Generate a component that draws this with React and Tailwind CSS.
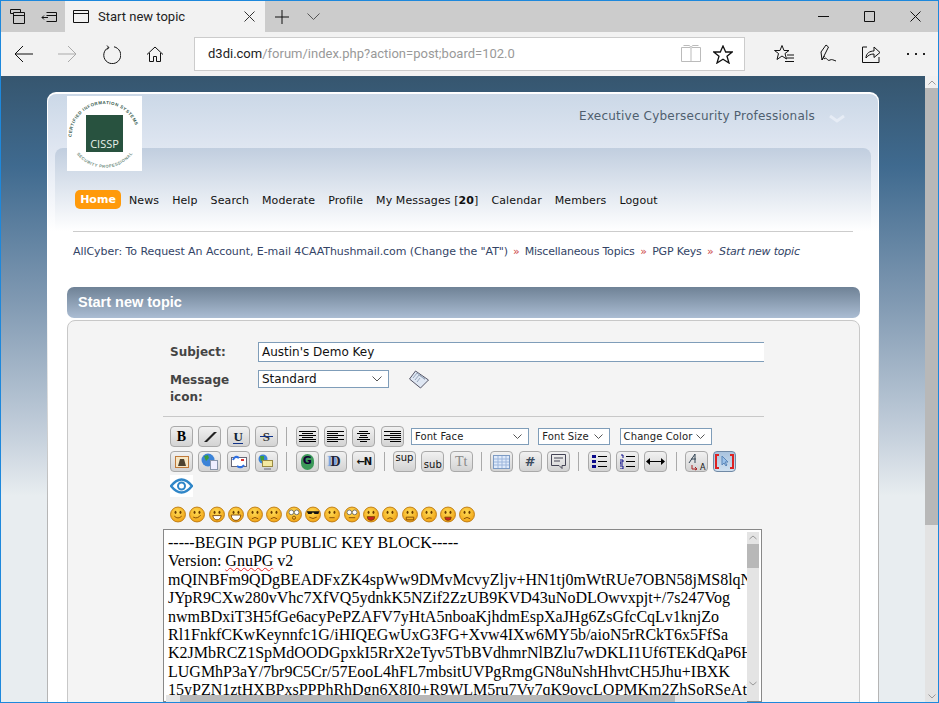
// App.jsx
import React from 'react';

const verdana = "font-['DejaVu_Sans',sans-serif]";

const lines = [
  'mQINBFm9QDgBEADFxZK4spWw9DMvMcvyZljv+HN1tj0mWtRUe7OBN58jMS8lqNwE',
  'JYpR9CXw280vVhc7XfVQ5ydnkK5NZif2ZzUB9KVD43uNoDLOwvxpjt+/7s247Vog',
  'nwmBDxiT3H5fGe6acyPePZAFV7yHtA5nboaKjhdmEspXaJHg6ZsGfcCqLv1knjZo',
  'Rl1FnkfCKwKeynnfc1G/iHIQEGwUxG3FG+Xvw4IXw6MY5b/aioN5rRCkT6x5FfSa',
  'K2JMbRCZ1SpMdOODGpxkI5RrX2eTyv5TbBVdhmrNlBZlu7wDKLI1Uf6TEKdQaP6HsT',
  'LUGMhP3aY/7br9C5Cr/57EooL4hFL7mbsitUVPgRmgGN8uNshHhvtCH5Jhu+IBXK',
  '15yPZN1ztHXBPxsPPPhRhDgn6X8I0+R9WLM5ru7Vy7qK9ovcLOPMKm2ZhSoRSeAtUw',
];

const nav = ['News', 'Help', 'Search', 'Moderate', 'Profile'];
const nav2 = ['Calendar', 'Members', 'Logout'];

// browser chrome icon, thin black strokes
const Ico = ({ w = 20, h = 20, stroke = '#111', children }) => (
  <svg width={w} height={h} viewBox={`0 0 ${w} ${h}`} fill="none" stroke={stroke} strokeWidth="1" className="shrink-0">
    {children}
  </svg>
);

const ToolBtn = ({ children, active }) => (
  <div className={`w-[23px] h-[21px] shrink-0 flex items-center justify-center rounded-[4px] border ${active ? 'bg-gradient-to-b from-[#a9c3de] to-[#cfe0f0] border-[#7089a5]' : 'bg-gradient-to-b from-[#f1f1f1] to-[#d3d3d3] border-[#a9a9a9]'}`}>
    {children}
  </div>
);

const Sep = () => <div className="w-px h-[19px] bg-[#aaa] mx-[3px] shrink-0" />;

const Lines = ({ rows }) => (
  <svg width="17" height="13" viewBox="0 0 17 13" stroke="#000" strokeWidth="1">
    {rows.map((r, i) => (
      <line key={i} x1={r[0]} x2={r[1]} y1={1.5 + i * 2} y2={1.5 + i * 2} />
    ))}
  </svg>
);

const FakeSelect = ({ label, className }) => (
  <div className={`h-[17px] border border-[#7f9db9] bg-white flex items-center justify-between pl-[3px] pr-[6px] text-[10px] tracking-[.1px] text-[#222] shrink-0 ${className}`}>
    <span>{label}</span>
    <svg width="9" height="5" viewBox="0 0 9 5" fill="none" stroke="#555"><path d="M.5.5l4 4 4-4" /></svg>
  </div>
);

const mouths = [
  'M4 9q3.500 3.500 7 0', 'M4 10q4 2 7-2', 'M3.500 8.500h8q-1 4-4 4t-4-4z', 'M3 8h9q-.5 5-4.500 5T3 8z',
  'M4.500 11.500q3-2.500 6 0', 'M4.500 11.500q3-2.500 6 0', 'M6 10.500a1.500 1.500 0 103 0 1.500 1.500 0 10-3 0', 'M4 10q3.500 2.500 7 0',
  'M5 10.500h5', 'M4.500 10.500h6', 'M4 9.500h7q0 3.500-3.500 3.500T4 9.500z', 'M5 11.500q2.500-2 5 0', 'M4 10h7v2.500H4z', 'M5 11.500q2.500-1.500 5-.5', 'M4.500 10h6q0 3-3 3t-3-3z', 'M4.500 11.500q3-2.500 6 0',
];

const Smiley = ({ i }) => (
  <svg width="16" height="17" viewBox="0 0 15 15" className="shrink-0">
    <circle cx="7.500" cy="7.500" r="7" fill="url(#smile)" stroke="#b8740a" strokeWidth=".8" />
    {i === 7 ? (
      <path d="M1.500 4.500h12l-1 2.500H9L7.500 5.500 6 7H3z" fill="#111" />
    ) : i === 6 || i === 9 ? (
      <g fill="#fff" stroke="#555" strokeWidth=".7"><circle cx="5" cy="5.500" r="2.200" /><circle cx="10" cy="5.500" r="2.200" /></g>
    ) : (
      <g fill="#6b3c00"><ellipse cx="5.200" cy="5.500" rx=".9" ry="1.500" /><ellipse cx="9.800" cy="5.500" rx=".9" ry="1.500" /></g>
    )}
    <path d={mouths[i]} fill={i === 3 || i === 2 ? '#fff' : i === 14 || i === 10 ? '#c22' : 'none'} stroke="#7a4200" strokeWidth=".8" />
  </svg>
);

const Logo = () => (
  <div className="w-[75px] h-[75px] bg-white relative z-10 shrink-0">
    <svg width="75" height="75" viewBox="0 0 75 75">
      <defs>
        <path id="top" d="M4.500 41A33 33 0 1 1 70.500 41" />
        <path id="bot" d="M6 52A35 35 0 0 0 69 52" />
      </defs>
      <text fontSize="4.400" fontWeight="700" fill="#33584a" fontFamily="Liberation Sans, sans-serif" letterSpacing=".5">
        <textPath href="#top">CERTIFIED INFORMATION SYSTEMS</textPath>
      </text>
      <text fontSize="4.200" fontWeight="700" fill="#6f8d81" fontFamily="Liberation Sans, sans-serif" letterSpacing=".45">
        <textPath href="#bot" startOffset="7">SECURITY PROFESSIONAL</textPath>
      </text>
      <rect x="19" y="19" width="37" height="37" fill="#28523f" />
      <text x="37.500" y="52" textAnchor="middle" fontSize="11" fill="#e8f0ea" fontFamily="Open Sans, sans-serif">CISSP</text>
    </svg>
  </div>
);

const App = () => {
  return (
    <div className="w-[939px] h-[703px] overflow-hidden flex flex-col border border-[#1d88dc] bg-[#f2f2f2]">
      <svg width="0" height="0" className="absolute">
        <defs>
          <radialGradient id="smile" cx=".45" cy=".35" r=".75">
            <stop offset="0" stopColor="#ffdc55" />
            <stop offset="1" stopColor="#ee9a0c" />
          </radialGradient>
        </defs>
      </svg>

      {/* Tab strip */}
      <header className="h-[31px] bg-[#cccccc] flex items-stretch shrink-0 font-['Roboto',sans-serif]">
        <div className="w-[64px] flex items-center pl-[9px] gap-[16px]">
          <Ico w={15} h={15}>
            <path d="M.5 4.500v-4h10v3M3.500 3.500h11v11h-11zM3.500 6.500h11M.5 4.500h3" />
          </Ico>
          <Ico w={17} h={12}>
            <path d="M5.500 1.500h10v9h-10M5.500 4.500h10M7 6.500H1M3 4.500l-2 2 2 2" />
          </Ico>
        </div>
        <div className="w-[200px] bg-[#f2f2f2] flex items-center pl-[8px] pr-[10px]">
          <Ico w={16} h={13}>
            <path d="M.5.5h15v12H.5zM.5 3.500h15" />
          </Ico>
          <span className="ml-[9px] text-[13px] text-[#222] flex-1">Start new topic</span>
          <Ico w={11} h={11}>
            <path d="M.5.5l10 10M10.500.5l-10 10" stroke="#333" />
          </Ico>
        </div>
        <div className="flex items-center pl-[10px] gap-[18px]">
          <Ico w={14} h={14}>
            <path d="M7 0v14M0 7h14" />
          </Ico>
          <Ico w={13} h={7} stroke="#555">
            <path d="M.5.5l6 6 6-6" />
          </Ico>
        </div>
        <div className="ml-auto flex items-center pr-[17px] gap-[35px]">
          <Ico w={11} h={11}><path d="M0 5.500h11" /></Ico>
          <Ico w={11} h={11}><path d="M.5.5h10v10H.5z" /></Ico>
          <Ico w={11} h={11}><path d="M.5.5l10 10M10.500.5l-10 10" /></Ico>
        </div>
      </header>

      {/* Address row */}
      <div className="h-[44px] bg-[#f2f2f2] flex items-center shrink-0 font-['Roboto',sans-serif]">
        <div className="flex items-center pl-[13px] gap-[25px] w-[193px]">
          <Ico w={19} h={18}><path d="M19 9H1M9 1L1 9l8 8" /></Ico>
          <Ico w={19} h={18} stroke="#aaa"><path d="M0 9h18M10 1l8 8-8 8" /></Ico>
          <Ico w={19} h={19}><path d="M6.500 2.500A8.500 8.500 0 1 0 12 1.800M5 .5l2 2.200-2.300 1.800" /></Ico>
          <Ico w={18} h={18}><path d="M1 9.500L9 2l8 7.500M3.500 8v8.500h4v-5h3v5h4V8" /></Ico>
        </div>
        <div className="w-[551px] h-[34px] bg-white border border-[#cccccc] flex items-center pl-[13px] pr-[11px]">
          <span className="text-[13px] text-[#222]">d3di.com<span className="text-[#999]">/forum/index.php?action=post;board=102.0</span></span>
          <div className="ml-auto flex items-center gap-[12px]">
            <Ico w={20} h={18} stroke="#bbb"><path d="M.5 2.500h8.500l1 1 1-1h8.500v14h-19zM10 3.500v13M2.500.5h6l1.500 2 1.500-2h6" /></Ico>
            <Ico w={20} h={19}><path d="M10 1l2.700 6h6.500l-5.200 4.200 2 6.800-6-3.800L4 18l2-6.800L.8 7h6.500z" strokeWidth="1.300" /></Ico>
          </div>
        </div>
        <div className="flex items-center pl-[29px] gap-[24px]">
          <Ico w={21} h={20}><path d="M8 1.500l2 5h5l-4 3 1.500 5.500L8 12l-5 3.500L4.500 9.500l-4-3h5.500zM13 11h7M13 14h7M11 17.500h9" /></Ico>
          <Ico w={18} h={20}><path d="M3 16L2 8l5-7 2.500 2-4.500 9zM3 16l2.500-4M5 15c3-3 3 3 6 1 2-1 3 0 6 1" /></Ico>
          <Ico w={20} h={20}><path d="M6 3H1.500v15.500H18V13M5 14c0-5 4-7 8-7V3l6 5.500-6 5V10c-3 0-6 1-8 4z" /></Ico>
          <div className="flex gap-[6px] pl-[2px]">
            <i className="w-[2px] h-[2px] bg-[#222]" /><i className="w-[2px] h-[2px] bg-[#222]" /><i className="w-[2px] h-[2px] bg-[#222]" />
          </div>
        </div>
      </div>

      {/* Viewport */}
      <div className="flex flex-1 min-h-0">
        <main className={`flex-1 min-w-0 pl-[46px] pt-[16px] overflow-hidden bg-[linear-gradient(to_bottom,#36566f_0,#3f6a8f_90px,#8099b2_225px,#c5d0dc_360px,#e8edf0_420px,#e8edf0_100%)] ${verdana}`}>
          <div className="w-[832px] h-[700px] rounded-t-[9px] px-px pt-[2px] bg-[linear-gradient(to_bottom,#ffffff_200px,#b5b5b5_420px)]">
            <div className="h-full rounded-t-[8px] bg-white overflow-hidden">
              {/* Header */}
              <div className="h-[54px] bg-gradient-to-b from-[#cbd8e7] to-[#dfe6f1] flex items-start pl-[19px]">
                <div className="mt-[2px] h-[75px]"><Logo /></div>
                <span className="ml-auto mt-[13px] text-[12px] tracking-[.22px] text-[#4f5f6f]">Executive Cybersecurity Professionals</span>
                <svg width="16" height="8" viewBox="0 0 16 8" fill="none" stroke="#e6ecf5" strokeWidth="3" className="ml-[14px] mt-[21px] mr-[33px]"><path d="M1 1l7 5 7-5" /></svg>
              </div>

              {/* Nav tab */}
              <div className="bg-gradient-to-b from-[#dfe6f1] to-white px-[7px]">
                <div className="h-[83px] rounded-t-[8px] bg-gradient-to-b from-[#c1cedf] to-white pt-[42px] pl-[20px] flex items-start text-[11px] text-[#111]">
                  <span className="h-[19px] w-[46px] pt-px rounded-[5px] bg-[#ff9a0a] text-white font-bold flex items-center justify-center">Home</span>
                  <div className="flex h-[21px] pt-px items-center ml-[8px] gap-[13px] tracking-[.1px] whitespace-nowrap">
                    {nav.map((n) => <span key={n}>{n}</span>)}
                    <span>My Messages [<b>20</b>]</span>
                    {nav2.map((n) => <span key={n}>{n}</span>)}
                  </div>
                </div>
              </div>

              {/* Breadcrumb */}
              <div className="mx-[25px] border-t border-[#cccccc] pt-[12px] text-[11px] text-[#346] tracking-[-.2px] whitespace-nowrap h-[56px]">
                <span className="tracking-[-.06px]">AllCyber: To Request An Account, E-mail 4CAAThushmail.com (Change the "AT")</span>
                <span className="mx-[5px] text-[#c44]">»</span>
                <span>Miscellaneous Topics</span>
                <span className="mx-[5.500px] text-[#c44]">»</span>
                <span>PGP Keys</span>
                <span className="mx-[5.500px] text-[#c44]">»</span>
                <span className="italic">Start new topic</span>
              </div>

              {/* Category bar */}
              <div className="ml-[19px] w-[793px] h-[31px] rounded-[7px] bg-gradient-to-b from-[#6f8296] to-[#abbdd3] flex items-center pl-[11px] text-white font-['Liberation_Sans',sans-serif] font-bold text-[14.500px]">
                Start new topic
              </div>

              {/* Post form */}
              <section className="ml-[19px] mt-[2px] w-[793px] h-[500px] rounded-t-[8px] border border-[#c8c8c8] bg-[#f4f4f4] pl-[95px] pr-[95px] pt-[21px]">
                <div className="grid grid-cols-[88px_1fr] pl-[7px] text-[#444] font-bold text-[12px]">
                  <div className="pt-[1px]">Subject:</div>
                  <div className="h-[20px] border border-[#7f9db9] border-r-0 bg-white pl-[3px] flex items-center font-normal text-[12px] text-[#111]">Austin's Demo Key</div>
                  <div className="pt-[10px] leading-[17px] col-start-1">Message<br />icon:</div>
                  <div className="pt-[8px] flex items-start font-normal text-[12px] text-[#111]">
                    <div className="w-[131px] h-[18px] border border-[#7f9db9] bg-white flex items-center justify-between pl-[3px] pr-[6px]">
                      <span>Standard</span>
                      <svg width="10" height="6" viewBox="0 0 10 6" fill="none" stroke="#555"><path d="M.5.5L5 5 9.500.5" /></svg>
                    </div>
                    <svg width="20" height="19" viewBox="0 0 20 19" className="ml-[20px]">
                      <path d="M.5 9l6-8 13 9-8 8z" fill="#dfe7f3" stroke="#556" />
                      <path d="M4 8l4-5 8 6M6 10l4-5 6 4.500M8 12l3-4" fill="none" stroke="#99a8bc" />
                    </svg>
                  </div>
                </div>

                <div className="border-t border-[#c8c8c8] mt-[10px]" />

                {/* BBC buttons */}
                <div className="pl-[7px] pt-[9px]">
                  <div className="flex items-center gap-[5.330px]">
                    <ToolBtn><span className="font-['Liberation_Serif',serif] font-bold text-[14px] leading-none">B</span></ToolBtn>
                    <ToolBtn><svg width="14" height="12" viewBox="0 0 14 12"><path d="M1 11L11 1h3L4 11z" fill="#222" /></svg></ToolBtn>
                    <ToolBtn><span className="font-['Liberation_Serif',serif] font-bold text-[13px] leading-[13px] text-[#123] border-b border-[#138]">U</span></ToolBtn>
                    <ToolBtn><span className="relative font-['Liberation_Serif',serif] font-bold text-[13px] leading-none text-[#333] before:content-[''] before:absolute before:left-[-3px] before:right-[-3px] before:top-[6px] before:h-px before:bg-[#138]">S</span></ToolBtn>
                    <Sep />
                    <ToolBtn><Lines rows={[[0, 17], [3, 14], [0, 17], [3, 14], [0, 17], [0, 17]]} /></ToolBtn>
                    <ToolBtn><Lines rows={[[0, 17], [0, 11], [0, 17], [0, 11], [0, 17], [0, 11]]} /></ToolBtn>
                    <ToolBtn><Lines rows={[[4, 13], [2, 15], [5, 12], [4, 13], [2, 15], [5, 12]]} /></ToolBtn>
                    <ToolBtn><Lines rows={[[0, 17], [6, 17], [0, 17], [6, 17], [0, 17], [6, 17]]} /></ToolBtn>
                    <FakeSelect label="Font Face" className="w-[118px] ml-[2px]" />
                    <FakeSelect label="Font Size" className="w-[72px] ml-[4px]" />
                    <FakeSelect label="Change Color" className="w-[92px] ml-[4px]" />
                  </div>

                  <div className="flex items-center gap-[5.330px] mt-[4px]">
                    <ToolBtn><svg width="14" height="12" viewBox="0 0 14 12"><rect x=".5" y=".5" width="13" height="11" fill="#f6e6c4" stroke="#c07a3a" /><path d="M3 10l2-7h4l2 7z" fill="#4d4230" /></svg></ToolBtn>
                    <ToolBtn><svg width="18" height="17" viewBox="0 0 18 17"><circle cx="7" cy="7" r="6.500" fill="#3b83d8" /><path d="M3 3l4-1 1 3-3 3zM9 9l3-2 1 3-2 2z" fill="#3f9c3a" /><rect x="9.500" y="7.500" width="7" height="9" fill="#eef" stroke="#8895aa" /></svg></ToolBtn>
                    <ToolBtn><svg width="17" height="16" viewBox="0 0 17 16"><rect x="1.500" y="3.500" width="15" height="9" fill="#fff" stroke="#667" /><path d="M9 4q-4-3-6 2M7 12q4 3 7-1" fill="none" stroke="#2e6fe0" strokeWidth="2" /><rect x="11" y="5" width="3" height="2" fill="#d33" /></svg></ToolBtn>
                    <ToolBtn><svg width="18" height="16" viewBox="0 0 18 16"><circle cx="6" cy="5" r="4.500" fill="#3b83d8" /><path d="M3 2l4 0 0 4-3 1z" fill="#3f9c3a" /><rect x="5.500" y="6.500" width="10" height="6" fill="#f4e9a0" stroke="#998a44" /><path d="M7 15h7" stroke="#667" /></svg></ToolBtn>
                    <Sep />
                    <ToolBtn><span className="w-[13px] h-[16px] rounded-full bg-[#3d9a5a] text-[#103] font-bold text-[11px] flex items-center justify-center">G</span></ToolBtn>
                    <ToolBtn><span className="font-['Liberation_Serif',serif] font-bold text-[14px] text-[#223] [text-shadow:-3px_0_1px_#6d9ade]">D</span></ToolBtn>
                    <ToolBtn><span className="text-[10px] font-bold text-[#111] tracking-[-1px]">←N</span></ToolBtn>
                    <Sep />
                    <ToolBtn><span className="text-[10px] leading-[12px] self-start text-[#111]">sup</span></ToolBtn>
                    <ToolBtn><span className="text-[10px] leading-[12px] self-end text-[#111]">sub</span></ToolBtn>
                    <ToolBtn><span className="font-['Liberation_Serif',serif] text-[14px] text-[#888]">Tt</span></ToolBtn>
                    <Sep />
                    <ToolBtn><svg width="17" height="14" viewBox="0 0 17 14"><rect x=".5" y=".5" width="16" height="13" fill="#dfeafa" stroke="#7d9bc4" /><path d="M1 4h15M1 7h15M1 10h15M5 1v12M9 1v12M13 1v12" stroke="#9db6dc" /></svg></ToolBtn>
                    <ToolBtn><span className="font-bold text-[13px] text-[#3b4b5e]">#</span></ToolBtn>
                    <ToolBtn><svg width="15" height="16" viewBox="0 0 15 16" fill="none" stroke="#445"><path d="M.5.500h14v11H11v3l-3-3H.500zM3 4h9M3 7h6" /></svg></ToolBtn>
                    <Sep />
                    <ToolBtn><svg width="15" height="15" viewBox="0 0 15 15"><path d="M0 1h4v3H0zM0 6h4v3H0zM0 11h4v3H0z" fill="#0a0a8a" /><path d="M6 2.500h9M6 7.500h9M6 12.500h9" stroke="#000" /></svg></ToolBtn>
                    <ToolBtn><svg width="15" height="15" viewBox="0 0 15 15"><path d="M1 1h2v3M0 6h3v2H0v2h3M0 12h3v3H0" fill="none" stroke="#0a0a8a" /><path d="M6 2.500h9M6 7.500h9M6 12.500h9" stroke="#000" /></svg></ToolBtn>
                    <ToolBtn><svg width="19" height="7" viewBox="0 0 19 7"><path d="M1 3.500h17" stroke="#000" /><path d="M0 3.500L4 0v7zM19 3.500L15 0v7z" fill="#000" /></svg></ToolBtn>
                    <Sep />
                    <ToolBtn><svg width="19" height="18" viewBox="0 0 19 18"><path d="M2 10L8 1v9M4 6h5" fill="none" stroke="#345" /><path d="M5 12v4h5M8 14l2 2-2 1" fill="none" stroke="#a22" /><text x="13" y="17" fontSize="8" fill="#111">A</text></svg></ToolBtn>
                    <ToolBtn active><svg width="19" height="15" viewBox="0 0 19 15" fill="none"><path d="M4 1H1v13h3M15 1h3v13h-3" stroke="#d22" strokeWidth="2" /><path d="M7 2v9l2-2 2 3 1-1-2-3h3z" fill="#9cc2ea" stroke="#5a86b8" /></svg></ToolBtn>
                  </div>

                  <div className="w-[23px] h-[22px] mt-[3px] bg-white flex items-center justify-center">
                    <svg width="23" height="16" viewBox="0 0 23 16">
                      <path d="M1 8q10.500-13 21 0-10.500 13-21 0z" fill="none" stroke="#2f86c8" strokeWidth="2.500" />
                      <circle cx="11.500" cy="8" r="3.500" fill="none" stroke="#2f86c8" strokeWidth="2" />
                    </svg>
                  </div>

                  <div className="flex gap-[3.300px] mt-[9px]">
                    {mouths.map((m, i) => <Smiley key={i} i={i} />)}
                  </div>
                </div>

                {/* Message body */}
                <div className="mt-[6px] w-[599px] h-[173px] border border-[#888] bg-white flex relative">
                  <div className="flex-1 min-w-0 overflow-hidden pl-[4px] pt-[4px] font-['Liberation_Serif',serif] text-[16px] leading-[18.400px] text-black whitespace-pre">
                    <div>-----BEGIN PGP PUBLIC KEY BLOCK-----</div>
                    <div>Version: <span className="underline decoration-wavy decoration-[#e22] decoration-1">GnuPG</span> v2</div>
                    {lines.map((l) => <div key={l}>{l}</div>)}
                  </div>
                  <div className="w-[12px] mr-[2px] mt-[2px] bg-[#e4e4e4] flex flex-col items-center shrink-0">
                    <svg width="8" height="12" viewBox="0 0 8 12" fill="none" stroke="#999" className="shrink-0"><path d="M.5 7l3.500-3 3.500 3" /></svg>
                    <div className="w-full h-[24px] bg-[#b8b8b8]" />
                    <svg width="8" height="12" viewBox="0 0 8 12" fill="none" stroke="#999" className="mt-[110px] shrink-0"><path d="M.5 4l3.500 3 3.500-3" /></svg>
                  </div>
                  <div className="absolute left-[2px] right-[14px] top-[165px] h-[8px] bg-[#e4e4e4] flex">
                    <div className="w-[14px]" />
                    <div className="w-[495px] bg-[#b8b8b8]" />
                  </div>
                </div>
              </section>
            </div>
          </div>
        </main>

        {/* Page scrollbar */}
        <aside className="w-[13px] shrink-0 bg-[#e3e3e3] flex flex-col">
          <div className="h-[12px] bg-[#f0f0f0] flex items-center justify-center">
            <svg width="8" height="5" viewBox="0 0 8 5" fill="none" stroke="#999"><path d="M.5 4.500L4 1l3.500 3.500" /></svg>
          </div>
          <div className="h-[437px] bg-[#b8b8b8]" />
          <div className="mt-auto h-[12px] flex items-center justify-center">
            <svg width="8" height="5" viewBox="0 0 8 5" fill="none" stroke="#999"><path d="M.5.500L4 4l3.500-3.500" /></svg>
          </div>
        </aside>
      </div>
    </div>
  );
};

export default App;
